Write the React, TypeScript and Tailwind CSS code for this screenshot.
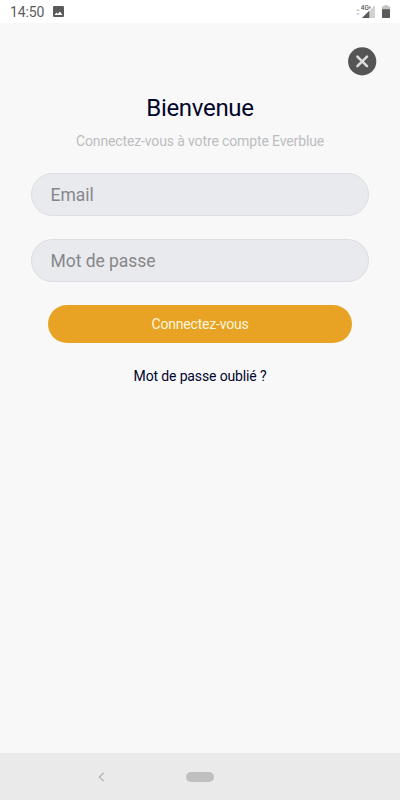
import { useState } from "react";

interface FieldProps {
  label: string;
  type: "email" | "password";
  value: string;
  onChange: (value: string) => void;
}

function Field({ label, type, value, onChange }: FieldProps) {
  return (
    <input
      type={type}
      value={value}
      onChange={(e) => onChange(e.target.value)}
      placeholder={label}
      aria-label={label}
      className="h-[43px] w-full rounded-full border border-[#dddde3] bg-[#e9eaee] pl-[18.5px] pr-5 pt-px text-[17.5px] tracking-[-0.04px] text-[#00052e] outline-none placeholder:text-[#86878a]"
    />
  );
}

function StatusBar() {
  return (
    <header className="flex h-[23px] shrink-0 items-center bg-white pl-[10px] pr-[10px] pt-px">
      <span className="w-[43px] text-[14px] leading-4 tracking-[-0.1px] text-[#5c5c5c]">14:50</span>

      {/* Screenshot notification */}
      <svg className="-mt-px h-[11px] w-[11px]" viewBox="0 0 11 11" aria-hidden="true">
        <rect width="11" height="11" rx="1.2" fill="#5a5a5a" />
        <path d="M1.5 9 3.4 6.4 4.8 8 6.8 5.4 9.5 9z" fill="#fff" />
      </svg>

      <div className="-mt-px ml-auto flex items-center">
        {/* Data activity + signal */}
        <svg className="h-4 w-[22px]" viewBox="0 0 22 16" aria-hidden="true">
          <path d="M1 7 3 4.8 5 7zM1 9.2h4L3 11.4z" fill="#cfcfcf" />
          <path d="M7 14 20 1v13z" fill="#d2d2d2" />
          <path d="M7 14 14.3 6.7V14z" fill="#5a5a5a" />
          <rect x="5.5" y="0" width="10" height="6.4" fill="#fff" />
          <text x="5.8" y="6" fontSize="6.4" fontWeight="500" fontFamily="Roboto, sans-serif" fill="#5a5a5a">
            4G
          </text>
          <text x="13.4" y="5" fontSize="4.5" fontWeight="700" fontFamily="Roboto, sans-serif" fill="#6a6a6a">
            +
          </text>
        </svg>

        {/* Battery */}
        <svg className="ml-[5px] h-[13px] w-2" viewBox="0 0 8 13" aria-hidden="true">
          <path d="M2.5 0h3v1.3H8V5H0V1.3h2.5z" fill="#c4c4c4" />
          <path d="M0 4.3h8v8q0 .7-.7.7H.7Q0 13 0 12.3z" fill="#5a5a5a" />
        </svg>
      </div>
    </header>
  );
}

function NavigationBar() {
  return (
    <nav className="grid h-[47px] shrink-0 grid-cols-4 items-center bg-[#eaeaea]">
      <span />
      <svg className="-ml-[2px] h-[10px] w-[7px]" viewBox="0 0 7 10" fill="none" aria-hidden="true">
        <path d="M5.8.8 1.4 5l4.4 4.2" stroke="#b4b4b4" strokeWidth="1.3" />
      </svg>
      <span className="-ml-[14px] h-[10px] w-7 rounded-full bg-[#bfbfbf]" />
    </nav>
  );
}

export default function App() {
  const [email, setEmail] = useState("");
  const [password, setPassword] = useState("");

  return (
    <div className="flex h-[800px] w-[400px] flex-col overflow-hidden bg-[#f8f8f8] font-['Roboto',sans-serif]">
      <StatusBar />

      <main className="flex flex-1 flex-col px-[31px] pt-6">
        <button type="button" aria-label="Fermer" className="-mr-2 h-[29px] w-[29px] self-end">
          <svg className="h-[29px] w-[29px]" viewBox="0 0 29 29" fill="none" aria-hidden="true">
            <circle cx="14.2" cy="14.4" r="14.1" fill="#555555" />
            <path d="m9.4 9.6 9.6 9.6m0-9.6-9.6 9.6" stroke="#dedede" strokeWidth="2.5" strokeLinecap="round" />
          </svg>
        </button>

        <h1 className="mt-4 text-center text-[24px] leading-8 tracking-[-0.3px] text-[#00052e]">Bienvenue</h1>
        <p className="mt-[7px] text-center text-[14px] leading-5 tracking-[-0.13px] text-[#bcbdc1]">
          Connectez-vous à votre compte Everblue
        </p>

        <form className="mt-[22px] flex flex-col" onSubmit={(e) => e.preventDefault()}>
          <Field label="Email" type="email" value={email} onChange={setEmail} />
          <div className="mt-[23px]">
            <Field label="Mot de passe" type="password" value={password} onChange={setPassword} />
          </div>
          <button
            type="submit"
            className="mx-[17.4px] mt-[23px] h-[38px] rounded-full bg-[#e8a325] text-[14px] tracking-[-0.2px] text-[#fdf6df]"
          >
            Connectez-vous
          </button>
        </form>

        <a href="#" className="mt-[23.4px] self-center text-[14px] leading-5 tracking-[-0.14px] text-[#00052e]">
          Mot de passe oublié ?
        </a>
      </main>

      <NavigationBar />
    </div>
  );
}
